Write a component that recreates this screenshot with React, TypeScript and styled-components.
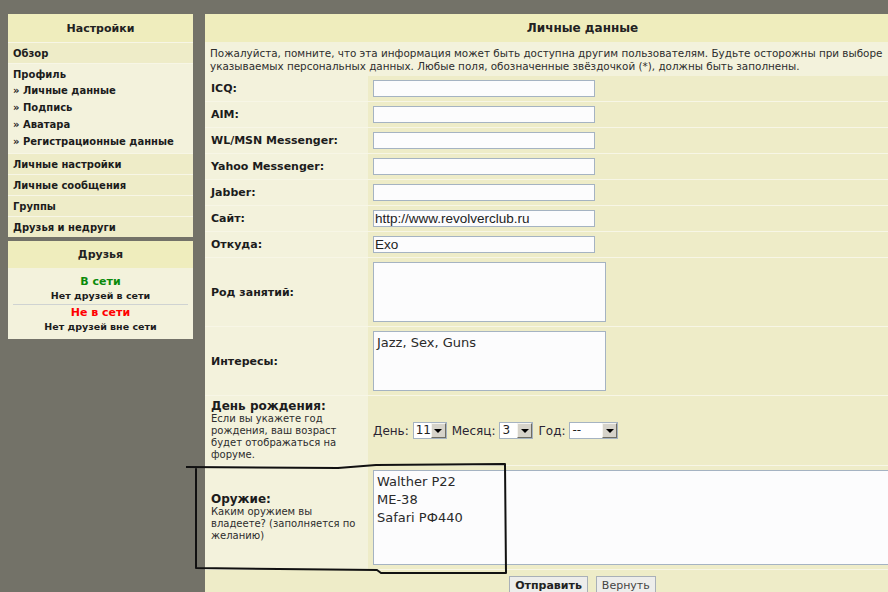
import React from "react";
import styled, { createGlobalStyle } from "styled-components";

const GlobalStyle = createGlobalStyle`
  html, body {
    margin: 0;
    padding: 0;
    background: #737268;
    overflow: hidden;
  }
  body {
    font-family: "DejaVu Sans", Verdana, sans-serif;
    font-size: 11px;
    color: #1c1c1c;
  }
`;

const Page = styled.div`
  position: relative;
  width: 888px;
  height: 592px;
  overflow: hidden;
  box-sizing: border-box;
  padding: 14px 0 0 8px;
  display: flex;
  align-items: flex-start;
  gap: 12px;
`;

const Sidebar = styled.div`
  width: 185px;
  flex-shrink: 0;
  display: flex;
  flex-direction: column;
  gap: 4px;
`;

const Panel = styled.div`
  background: #f3f2dc;
`;

const PanelHeader = styled.div<{ $h?: number; $size?: number }>`
  height: ${(p) => p.$h ?? 28}px;
  background: #efedbd;
  display: flex;
  align-items: center;
  justify-content: center;
  font-weight: bold;
  font-size: ${(p) => p.$size ?? 11}px;
  color: #222;
`;

const MenuItem = styled.div`
  padding: 4px 5px 3px;
  line-height: 13px;
  font-size: 10px;
  font-weight: bold;
  white-space: nowrap;
  background: #eeecc8;
  border-top: 1px solid #f7f6e6;
`;

const ProfileBlock = styled.div`
  padding: 4px 5px 3px;
  background: #f3f2dc;
  border-top: 1px solid #f7f6e6;
  font-size: 10px;
  font-weight: bold;
  white-space: nowrap;
`;

const ProfileTitle = styled.div`
  line-height: 14px;
`;

const SubLink = styled.div`
  line-height: 17px;
  &::before {
    content: "» ";
  }
`;

const FriendsBody = styled.div`
  padding: 6px 0 5px;
  text-align: center;
  font-weight: bold;
`;

const Status = styled.div<{ $color: string }>`
  font-size: 11px;
  line-height: 15px;
  color: ${(p) => p.$color};
`;

const StatusNote = styled.div`
  font-size: 9.5px;
  line-height: 14px;
`;

const Divider = styled.div`
  height: 1px;
  margin: 1px 5px 0;
  background: #cfd3d2;
`;

const Main = styled.div`
  width: 755px;
  flex-shrink: 0;
  background: #eeecc8;
`;

const Description = styled.div`
  height: 34px;
  box-sizing: border-box;
  padding: 5px 5px 3px;
  font-size: 10.4px;
  line-height: 13px;
  white-space: nowrap;
  background: #f3f2dc;
  color: #2d2d2d;
`;

const Form = styled.div`
  display: grid;
  grid-template-columns: 163px 1fr;
`;

const LabelCell = styled.div`
  padding: 4px 6px;
  background: #f3f2dc;
  border-bottom: 1px solid #f7f6e6;
  display: flex;
  flex-direction: column;
  justify-content: center;
  font-weight: bold;
  line-height: 13px;
`;

const LabelTitle = styled.div`
  font-size: 12px;
  line-height: 13px;
`;

const Hint = styled.div`
  font-size: 10px;
  font-weight: normal;
  line-height: 12px;
  color: #2d2d2d;
`;

const FieldCell = styled.div`
  padding: 4px 5px;
  background: #eeecc8;
  border-bottom: 1px solid #f7f6e6;
  display: flex;
  align-items: center;
  min-width: 0;
`;

const TextInput = styled.input`
  width: 222px;
  height: 17px;
  box-sizing: border-box;
  margin: 0;
  padding: 0 1px;
  border: 1px solid #a5b3c2;
  background: #fcfcfd;
  font-family: "Liberation Sans", Arial, sans-serif;
  font-size: 13.5px;
  color: #222;
  outline: none;
`;

const TextArea = styled.textarea<{ $w?: string; $h: number }>`
  width: ${(p) => p.$w ?? "233px"};
  height: ${(p) => p.$h}px;
  box-sizing: border-box;
  margin: 0;
  padding: 2px 3px;
  border: 1px solid #a5b3c2;
  background: #fcfcfd;
  font-family: "DejaVu Sans", Verdana, sans-serif;
  font-size: 13px;
  line-height: 18px;
  color: #2a2a2a;
  resize: none;
  outline: none;
  overflow: hidden;
`;

const DateText = styled.span`
  font-size: 12px;
  color: #2b2433;
  margin-right: 4px;
`;

const SelectBox = styled.div<{ $w: number }>`
  width: ${(p) => p.$w}px;
  height: 17px;
  box-sizing: border-box;
  border: 1px solid #a5b3c2;
  background: #fff;
  display: flex;
  margin-right: 5px;
`;

const SelectValue = styled.span`
  flex: 1;
  padding-left: 2px;
  font-size: 12px;
  line-height: 15px;
  color: #222;
`;

const SelectArrow = styled.span`
  width: 15px;
  box-sizing: border-box;
  background: #d6d3ca;
  border: 1px solid;
  border-color: #f5f4ef #6f6d63 #6f6d63 #f5f4ef;
  display: flex;
  align-items: center;
  justify-content: center;
  &::after {
    content: "";
    border-left: 4px solid transparent;
    border-right: 4px solid transparent;
    border-top: 4px solid #000;
  }
`;

const Buttons = styled.div`
  display: flex;
  justify-content: center;
  gap: 8px;
  padding: 6px 0 6px;
`;

const Button = styled.button<{ $primary?: boolean }>`
  height: 19px;
  padding: 0 5px;
  border: 1px solid #a9b0b8;
  background: #ededeb;
  font-family: "DejaVu Sans", Verdana, sans-serif;
  font-size: 11px;
  font-weight: ${(p) => (p.$primary ? "bold" : "normal")};
  color: ${(p) => (p.$primary ? "#222" : "#444")};
`;

const Scribble = styled.svg`
  position: absolute;
  left: 0;
  top: 0;
  pointer-events: none;
`;

const menuTop = ["Обзор"];
const profileLinks = ["Личные данные", "Подпись", "Аватара", "Регистрационные данные"];
const menuBottom = ["Личные настройки", "Личные сообщения", "Группы", "Друзья и недруги"];

const simpleFields: { label: string; value?: string }[] = [
  { label: "ICQ:" },
  { label: "AIM:" },
  { label: "WL/MSN Messenger:" },
  { label: "Yahoo Messenger:" },
  { label: "Jabber:" },
  { label: "Сайт:", value: "http://www.revolverclub.ru" },
  { label: "Откуда:", value: "Exo" },
];

const Select = ({ value, w }: { value: string; w: number }) => (
  <SelectBox $w={w}>
    <SelectValue>{value}</SelectValue>
    <SelectArrow />
  </SelectBox>
);

export default function App() {
  return (
    <Page>
      <GlobalStyle />
      <Sidebar>
        <Panel>
          <PanelHeader>Настройки</PanelHeader>
          {menuTop.map((m) => (
            <MenuItem key={m}>{m}</MenuItem>
          ))}
          <ProfileBlock>
            <ProfileTitle>Профиль</ProfileTitle>
            {profileLinks.map((l) => (
              <SubLink key={l}>{l}</SubLink>
            ))}
          </ProfileBlock>
          {menuBottom.map((m) => (
            <MenuItem key={m}>{m}</MenuItem>
          ))}
        </Panel>
        <Panel>
          <PanelHeader $h={27}>Друзья</PanelHeader>
          <FriendsBody>
            <Status $color="#0b8a0b">В сети</Status>
            <StatusNote>Нет друзей в сети</StatusNote>
            <Divider />
            <Status $color="#ff0000">Не в сети</Status>
            <StatusNote>Нет друзей вне сети</StatusNote>
          </FriendsBody>
        </Panel>
      </Sidebar>

      <Main>
        <PanelHeader $size={12}>Личные данные</PanelHeader>
        <Description>
          Пожалуйста, помните, что эта информация может быть доступна другим пользователям. Будьте осторожны при выборе
          <br />
          указываемых персональных данных. Любые поля, обозначенные звёздочкой (*), должны быть заполнены.
        </Description>
        <Form>
          {simpleFields.map((f) => (
            <React.Fragment key={f.label}>
              <LabelCell>{f.label}</LabelCell>
              <FieldCell>
                <TextInput defaultValue={f.value ?? ""} />
              </FieldCell>
            </React.Fragment>
          ))}

          <LabelCell>Род занятий:</LabelCell>
          <FieldCell>
            <TextArea $h={60} defaultValue="" />
          </FieldCell>

          <LabelCell>Интересы:</LabelCell>
          <FieldCell>
            <TextArea $h={60} defaultValue="Jazz, Sex, Guns" />
          </FieldCell>

          <LabelCell>
            <LabelTitle>День рождения:</LabelTitle>
            <Hint>
              Если вы укажете год
              <br />
              рождения, ваш возраст
              <br />
              будет отображаться на
              <br />
              форуме.
            </Hint>
          </LabelCell>
          <FieldCell>
            <DateText>День:</DateText>
            <Select value="11" w={34} />
            <DateText>Месяц:</DateText>
            <Select value="3" w={34} />
            <DateText>Год:</DateText>
            <Select value="--" w={49} />
          </FieldCell>

          <LabelCell>
            <LabelTitle>Оружие:</LabelTitle>
            <Hint>
              Каким оружием вы
              <br />
              владеете? (заполняется по
              <br />
              желанию)
            </Hint>
          </LabelCell>
          <FieldCell>
            <TextArea $w="100%" $h={95} defaultValue={"Walther P22\nME-38\nSafari РФ440"} />
          </FieldCell>
        </Form>
        <Buttons>
          <Button $primary>Отправить</Button>
          <Button>Вернуть</Button>
        </Buttons>
      </Main>

      <Scribble width="888" height="592" viewBox="0 0 888 592">
        <path
          d="M186 467 L338 468 L376 465 L505 464 L506 573 L381 573 L377 570 L196 568 L196 468"
          fill="none"
          stroke="#111"
          strokeWidth="2"
          strokeLinejoin="round"
        />
      </Scribble>
    </Page>
  );
}
